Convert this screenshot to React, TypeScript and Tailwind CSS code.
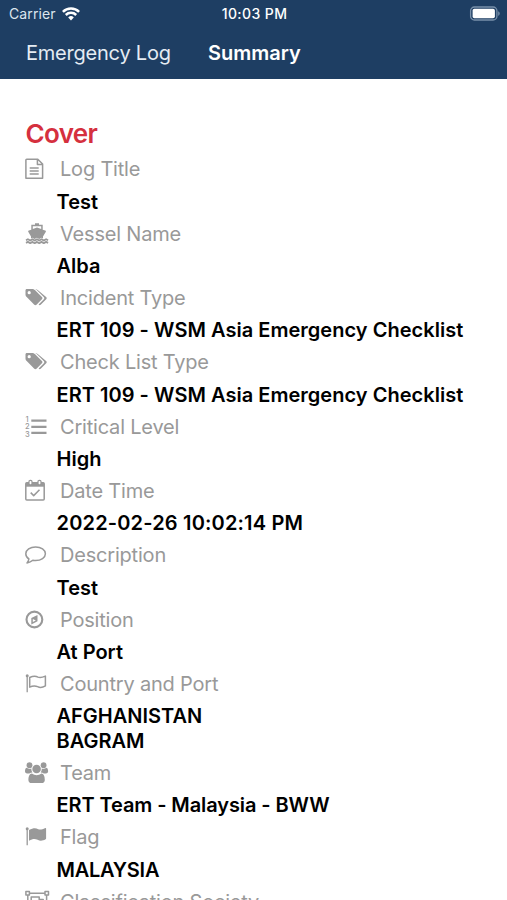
import React from "react";

type IconProps = {
  children: React.ReactNode;
};

type Field = {
  label: string;
  values: string[];
  icon: React.ReactNode;
  tracking?: string;
};

function Icon({ children }: IconProps) {
  return (
    <svg
      viewBox="0 0 28 24"
      className="h-6 w-7 shrink-0"
      fill="none"
      stroke="currentColor"
      strokeWidth="1.5"
      strokeLinejoin="round"
      aria-hidden="true"
    >
      {children}
    </svg>
  );
}

function FileIcon() {
  return (
    <Icon>
      <path d="M2.7 2.2h11.1l4.8 4.8v14.2H1.9V3q0-.8.8-.8zM13.4 2.4v5h5" />
      <path d="M5.7 10.9h9M5.7 14h9M5.7 17.1h9" />
    </Icon>
  );
}

function ShipIcon() {
  return (
    <Icon>
      <path
        d="M11 1.2h4v1.6h3.7v4.9l2.5.9c.8.3.9.8.5 1.5L19 14.4v2.2l-1.5-.8-2.3 1.3-2.3-1.3-2.3 1.3-2.2-1.3-1.4.8v-2.2L4.4 10.1c-.4-.7-.3-1.2.5-1.5l2.4-.9V2.8H11zM8.8 4.2v2.7l4.2-1.4 4.2 1.4V4.2z"
        fill="currentColor"
        stroke="none"
      />
      <path
        d="m2 18.2 1.9-1 2.3 1.3 2.3-1.3 2.2 1.3 2.3-1.3 2.2 1.3 2.3-1.3 2.3 1.3 2.3-1.3 2 1M2 20.9l1.9-1 2.3 1.3 2.3-1.3 2.2 1.3 2.3-1.3 2.2 1.3 2.3-1.3 2.3 1.3 2.3-1.3 2 1"
        strokeWidth="1.8"
      />
    </Icon>
  );
}

function TagsIcon() {
  return (
    <Icon>
      <g fill="currentColor" stroke="none">
        <path
          d="M2.8 3h5.4c.9 0 2 .5 2.7 1.1l7 7c.7.7.7 1.5 0 2.2l-5.4 5.4c-.6.6-1.5.6-2.2 0l-7.6-7.6c-.7-.7-1.2-1.8-1.2-2.7V4.3C1.5 3.6 2.1 3 2.8 3zm2.4 2.1a1.6 1.6 0 1 0 0 3.2 1.6 1.6 0 0 0 0-3.2z"
          fillRule="evenodd"
        />
        <path d="M11 3c1 0 2.1.5 2.7 1.1l8.4 7c.8.7.8 1.5.1 2.2l-5.5 5.4c-.7.6-1.4.6-2.1-.1l5-5c.9-.9.9-1.8.1-2.6l-7-7C12.2 3.4 11.6 3.2 11 3z" />
      </g>
    </Icon>
  );
}

function ListIcon() {
  return (
    <Icon>
      <path d="M7.3 5.7h15.2M7.3 11.8h15.2M7.3 17.9h15.2" strokeWidth="2.3" />
      <g fill="currentColor" stroke="none" fontSize="7.5" fontWeight="500">
        <text x="1.4" y="7.2">1</text>
        <text x="1" y="14.4">2</text>
        <text x="1" y="21.8">3</text>
      </g>
    </Icon>
  );
}

function CalendarIcon() {
  return (
    <Icon>
      <rect x="1.8" y="3.7" width="18.4" height="17.3" rx="1" />
      <path d="M2 3.7h18v4H2z" fill="currentColor" stroke="none" />
      <rect x="5" y="1.3" width="3" height="4.6" rx="1.3" fill="white" strokeWidth="1.2" />
      <rect x="14" y="1.3" width="3" height="4.6" rx="1.3" fill="white" strokeWidth="1.2" />
      <path d="m6.7 13.6 3 3 5.8-5.8" />
    </Icon>
  );
}

function CommentIcon() {
  return (
    <Icon>
      <path d="M11.6 4c5.5 0 9.8 3 9.8 6.8s-4.3 6.8-9.8 6.8q-1.5 0-2.8-.3c-1.6 1.5-3.5 2.3-5.8 2.6.9-1 1.6-2.1 1.9-3.9-2-1.2-3.1-3.1-3.1-5.2C1.8 7 6.1 4 11.6 4z" />
    </Icon>
  );
}

function CompassIcon() {
  return (
    <Icon>
      <circle cx="10.4" cy="11.5" r="7.9" strokeWidth="2.1" />
      <path d="M13.5 6.9v6.4l-6.2 3.2v-6.4z" fill="currentColor" stroke="none" />
      <path d="m8.8 11 3 1.5-3 1.6z" fill="white" stroke="none" />
    </Icon>
  );
}

function FlagOutlineIcon() {
  return (
    <Icon>
      <circle cx="3.2" cy="3.7" r="1.5" fill="currentColor" stroke="none" />
      <path d="M3.2 3.7v16.5" strokeWidth="1.3" />
      <path d="M5.7 5.5c4.5-2.2 6.1-1.6 8.3-.4 2 .9 4.2.5 7.4-1v9.8c-2.8 1.7-5.3 2.1-7.8.8-2.8-1.4-5-1.1-7.9.5z" />
    </Icon>
  );
}

function TeamIcon() {
  return (
    <Icon>
      <g fill="currentColor" stroke="none">
        <circle cx="5.5" cy="4.2" r="2.9" />
        <circle cx="19.6" cy="4.2" r="2.9" />
        <path d="M2.5 6.8c2 1.3 3.7 1.1 4.9.7-.2 1.5.2 2.8 1 3.9-1.3 0-2.3.3-3.1 1H3.2c-1.4 0-2.2-.6-2.2-1.8 0-1.7.3-3.4 1.5-3.8zM22.6 6.8c-2 1.3-3.7 1.1-4.9.7.2 1.5-.2 2.8-1 3.9 1.3 0 2.3.3 3.1 1h2.1c1.4 0 2.2-.6 2.2-1.8 0-1.7-.3-3.4-1.5-3.8z" />
        <circle cx="12.6" cy="8" r="4.3" />
        <path d="M8 12.5c2.9 2.2 6.4 2.2 9.3 0 2.6.2 3.5 3 3.5 6.4 0 2-1.2 3.1-3.2 3.1H7.6c-2 0-3.2-1.1-3.2-3.1 0-3.4 1-6.2 3.6-6.4z" />
      </g>
    </Icon>
  );
}

function FlagIcon() {
  return (
    <Icon>
      <circle cx="3.2" cy="3.7" r="1.5" fill="currentColor" stroke="none" />
      <path d="M3.2 3.7v16.5" strokeWidth="1.3" />
      <path
        d="M5 5c4.6-2.5 6.9-2.1 9.2-.8 1.9.8 3.9.4 7.1-1.3.5-.1.8.1.8.6v9.9c0 .4-.2.6-.5.8-3 1.7-5.4 1.9-8 .6-2.8-1.4-5-1.1-8.6.9z"
        fill="currentColor"
        stroke="none"
      />
    </Icon>
  );
}

function ObjectGroupIcon() {
  return (
    <Icon>
      <path d="M3.8 3.3h18.8v17.4H3.8z" />
      <path d="M7.2 7h8v7h-8zM15.2 9.5h4V18h-9v-4" />
      <g fill="white">
        <path d="M1.9 1.5h3.5V5H1.9zM21 1.5h3.5V5H21zM1.9 18.8h3.5v3.5H1.9zM21 18.8h3.5v3.5H21z" />
      </g>
    </Icon>
  );
}

const fields: Field[] = [
  { label: "Log Title", values: ["Test"], icon: <FileIcon /> },
  { label: "Vessel Name", values: ["Alba"], icon: <ShipIcon /> },
  {
    label: "Incident Type",
    values: ["ERT 109 - WSM Asia Emergency Checklist"],
    icon: <TagsIcon />,
    tracking: "tracking-[0.03px]"
  },
  {
    label: "Check List Type",
    values: ["ERT 109 - WSM Asia Emergency Checklist"],
    icon: <TagsIcon />,
    tracking: "tracking-[0.03px]"
  },
  { label: "Critical Level", values: ["High"], icon: <ListIcon /> },
  {
    label: "Date Time",
    values: ["2022-02-26 10:02:14 PM"],
    icon: <CalendarIcon />,
    tracking: "tracking-[0.17px]"
  },
  { label: "Description", values: ["Test"], icon: <CommentIcon /> },
  { label: "Position", values: ["At Port"], icon: <CompassIcon /> },
  { label: "Country and Port", values: ["AFGHANISTAN", "BAGRAM"], icon: <FlagOutlineIcon /> },
  {
    label: "Team",
    values: ["ERT Team - Malaysia - BWW"],
    icon: <TeamIcon />,
    tracking: "tracking-[-0.1px]"
  },
  { label: "Flag", values: ["MALAYSIA"], icon: <FlagIcon />, tracking: "tracking-[-0.25px]" },
  { label: "Classification Society", values: [], icon: <ObjectGroupIcon /> }
];

function StatusBar() {
  return (
    <div className="flex h-[27px] items-center pr-[7px] pl-[9px] text-[14px]">
      <div className="flex flex-1 items-center gap-1.5 tracking-[0.1px] text-[#dce5ee]">
        Carrier
        <svg
          viewBox="0 0 18 14"
          className="h-3.5 w-[18px]"
          fill="none"
          stroke="white"
          strokeWidth="2.5"
          aria-hidden="true"
        >
          <path d="M.9 4.8a11.5 11.5 0 0 1 16.2 0M3.8 8a7.4 7.4 0 0 1 10.4 0" />
          <path d="m9 13.5-2.8-3.1a4 4 0 0 1 5.6 0z" fill="white" stroke="none" />
        </svg>
      </div>
      <div className="text-center font-medium tracking-[0.4px] whitespace-nowrap">10:03 PM</div>
      <div className="flex flex-1 justify-end">
        <svg viewBox="0 0 31 15" className="h-[15px] w-[31px]" aria-hidden="true">
          <rect x="1.6" y="1" width="26.3" height="13" rx="3.8" fill="none" stroke="#7890aa" strokeWidth="1.3" />
          <rect x="3.6" y="2.7" width="22.3" height="9.6" rx="1.8" fill="white" />
          <path d="M29.2 5.2c2 .8 2 3.8 0 4.6z" fill="#7890aa" />
        </svg>
      </div>
    </div>
  );
}

export default function App() {
  return (
    <div className="h-[900px] w-[507px] overflow-hidden bg-white font-['Inter',sans-serif]">
      <header className="h-[79px] bg-[#1e3e63] text-white">
        <StatusBar />
        <nav className="flex h-[51px] items-center gap-[37px] pl-[26px] text-[20px] whitespace-nowrap">
          <a className="w-[145px] tracking-[-0.22px] text-[#e5ecf3]">Emergency Log</a>
          <a className="font-semibold">Summary</a>
        </nav>
      </header>

      <main className="pt-[38px] pl-6">
        <h1 className="h-[36.4px] pl-[1.5px] text-[26px] leading-[34px] font-semibold tracking-[-0.65px] text-[#d5303e]">
          Cover
        </h1>
        {fields.map((field) => (
          <section key={field.label}>
            <div className="flex h-[32.2px] items-center text-[#999999]">
              {field.icon}
              <span className="pl-2 text-[20px] tracking-[-0.2px] whitespace-nowrap">{field.label}</span>
            </div>
            <div
              className={`pt-[4.2px] pb-[3.2px] pl-[32.5px] text-[20px] leading-[24.75px] font-semibold whitespace-nowrap text-black ${field.tracking ?? ""}`}
            >
              {field.values.map((value) => (
                <p key={value}>{value}</p>
              ))}
            </div>
          </section>
        ))}
      </main>
    </div>
  );
}
